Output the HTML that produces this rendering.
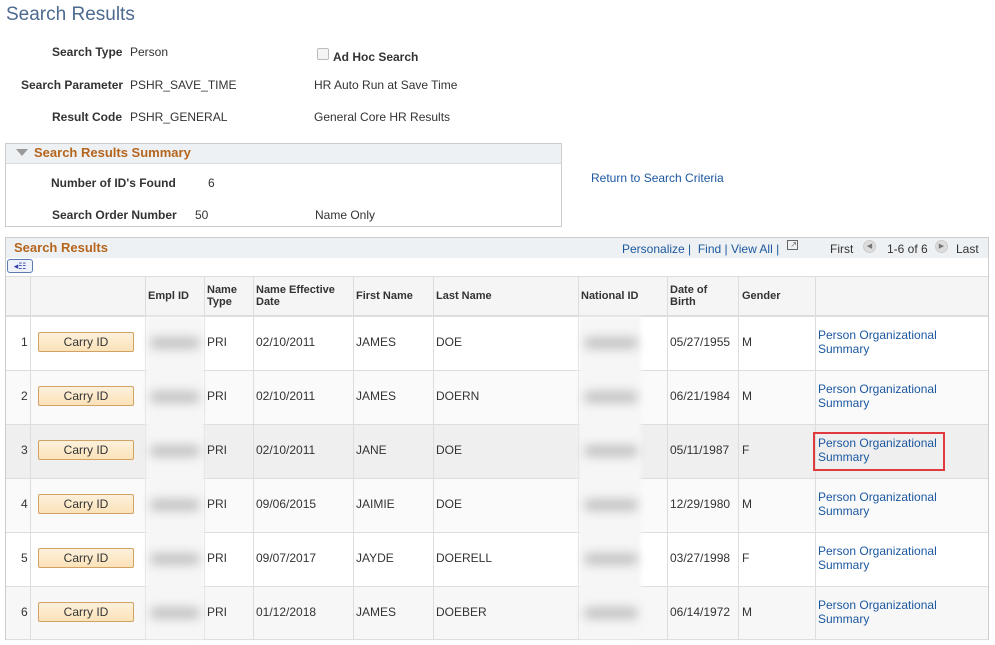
<!DOCTYPE html>
<html><head><meta charset="utf-8"><style>
*{margin:0;padding:0;box-sizing:border-box}
body{width:995px;height:645px;background:#fff;font-family:"Liberation Sans",Arial,sans-serif;font-size:12px;color:#333;position:relative;overflow:hidden}
.a{position:absolute;white-space:nowrap}
.b{font-weight:bold}
.lnk{color:#1c58a0}
.or{color:#b5651d;font-weight:bold;font-size:13px}
.hd{font-weight:bold;font-size:11px;line-height:12px;color:#333}
.btn{position:absolute;left:38px;width:96px;height:20px;border:1px solid #d2a265;border-radius:2px;background:linear-gradient(#fdf1dc,#fbe2b8);text-align:center;line-height:18px;color:#333}
.blur{position:absolute;height:12px;background:#c4c4c4;filter:blur(5px);border-radius:6px}
.vl{position:absolute;top:276px;height:363px;width:1px;background:#ddd}
.hl{position:absolute;left:6px;width:982px;height:1px;background:#ddd}
</style></head><body>
<div class="a" style="left:6px;top:4px;font-size:19px;color:#4d6a8f">Search Results</div>
<div class="a b" style="left:52px;top:45px">Search Type</div><div class="a" style="left:130px;top:45px">Person</div>
<div class="a" style="left:317px;top:48px;width:12px;height:12px;border:1px solid #bbb;border-radius:2px;background:#f4f4f4"></div>
<div class="a b" style="left:333px;top:50px">Ad Hoc Search</div>
<div class="a b" style="left:21px;top:78px">Search Parameter</div><div class="a" style="left:130px;top:78px">PSHR_SAVE_TIME</div><div class="a" style="left:314px;top:78px">HR Auto Run at Save Time</div>
<div class="a b" style="left:52px;top:110px">Result Code</div><div class="a" style="left:130px;top:110px">PSHR_GENERAL</div><div class="a" style="left:314px;top:110px">General Core HR Results</div>

<div class="a" style="left:5px;top:143px;width:557px;height:84px;border:1px solid #ccc"></div>
<div class="a" style="left:6px;top:144px;width:555px;height:20px;background:#eef1f3;border-bottom:1px solid #ddd"></div>
<div class="a" style="left:16px;top:149px;width:0;height:0;border-left:6px solid transparent;border-right:6px solid transparent;border-top:7px solid #999"></div>
<div class="a or" style="left:34px;top:145px">Search Results Summary</div>
<div class="a b" style="left:51px;top:176px">Number of ID's Found</div><div class="a" style="left:208px;top:176px">6</div>
<div class="a b" style="left:52px;top:208px">Search Order Number</div><div class="a" style="left:195px;top:208px">50</div><div class="a" style="left:315px;top:208px">Name Only</div>
<div class="a lnk" style="left:591px;top:171px">Return to Search Criteria</div>

<div class="a" style="left:5px;top:237px;width:984px;height:403px;border:1px solid #ccc"></div>
<div class="a" style="left:6px;top:238px;width:982px;height:20px;background:#eef1f3"></div>
<div class="a or" style="left:14px;top:240px">Search Results</div>
<div class="a lnk" style="left:622px;top:242px">Personalize | &nbsp;Find | View All | </div>
<div class="a" style="left:787px;top:240px;width:11px;height:10px;border:1px solid #666;font-size:8px;line-height:8px;color:#666;text-align:right">↗</div>
<div class="a" style="left:830px;top:242px">First</div>
<div class="a" style="left:863px;top:240px;width:13px;height:13px;border-radius:50%;background:#ddd;border:1px solid #ccc;font-size:7px;line-height:11px;text-align:center;color:#777">◀</div>
<div class="a" style="left:887px;top:242px">1-6 of 6</div>
<div class="a" style="left:935px;top:240px;width:13px;height:13px;border-radius:50%;background:#ddd;border:1px solid #ccc;font-size:7px;line-height:11px;text-align:center;color:#777">▶</div>
<div class="a" style="left:956px;top:242px">Last</div>
<div class="a" style="left:7px;top:259px;width:26px;height:14px;border:1px solid #5a7ab0;border-radius:3px;background:#eef2fa;font-size:9px;line-height:12px;color:#34a;text-align:center">◂☷</div>

<div class="a" style="left:6px;top:276px;width:982px;height:40px;background:#f5f5f5"></div>
<div class="a" style="left:6px;top:370px;width:982px;height:54px;background:#fafafa"></div>
<div class="a" style="left:6px;top:424px;width:982px;height:54px;background:#efefef"></div>
<div class="a" style="left:6px;top:478px;width:982px;height:54px;background:#fafafa"></div>
<div class="a" style="left:6px;top:586px;width:982px;height:54px;background:#f7f7f7"></div>
<div class="hl" style="top:276px"></div><div class="hl" style="top:315px;height:2px"></div>
<div class="hl" style="top:370px"></div><div class="hl" style="top:424px"></div><div class="hl" style="top:478px"></div><div class="hl" style="top:532px"></div><div class="hl" style="top:586px"></div><div class="hl" style="top:639px"></div>
<div class="vl" style="left:30px"></div><div class="vl" style="left:145px"></div><div class="vl" style="left:204px"></div><div class="vl" style="left:253px"></div><div class="vl" style="left:353px"></div><div class="vl" style="left:433px"></div><div class="vl" style="left:578px"></div><div class="vl" style="left:667px"></div><div class="vl" style="left:738px"></div><div class="vl" style="left:815px"></div>
<div class="a" style="left:146px;top:317px;width:58px;height:322px;background:#f6f6f6;filter:blur(2px)"></div>
<div class="a" style="left:579px;top:317px;width:62px;height:322px;background:#f6f6f6;filter:blur(2px)"></div>

<div class="a hd" style="left:148px;top:290px">Empl ID</div>
<div class="a hd" style="left:207px;top:284px">Name<br>Type</div>
<div class="a hd" style="left:256px;top:284px">Name Effective<br>Date</div>
<div class="a hd" style="left:356px;top:290px">First Name</div>
<div class="a hd" style="left:436px;top:290px">Last Name</div>
<div class="a hd" style="left:581px;top:290px">National ID</div>
<div class="a hd" style="left:670px;top:284px">Date of<br>Birth</div>
<div class="a hd" style="left:742px;top:290px">Gender</div>

<div class="a" style="left:21px;top:335px">1</div><div class="btn" style="top:332px">Carry ID</div><div class="blur" style="left:150px;top:337px;width:50px"></div><div class="a" style="left:207px;top:335px">PRI</div><div class="a" style="left:256px;top:335px">02/10/2011</div><div class="a" style="left:356px;top:335px">JAMES</div><div class="a" style="left:436px;top:335px">DOE</div><div class="blur" style="left:584px;top:337px;width:54px"></div><div class="a" style="left:670px;top:335px">05/27/1955</div><div class="a" style="left:742px;top:335px">M</div><div class="a lnk" style="left:818px;top:328px;line-height:14px">Person Organizational<br>Summary</div>
<div class="a" style="left:21px;top:389px">2</div><div class="btn" style="top:386px">Carry ID</div><div class="blur" style="left:150px;top:391px;width:50px"></div><div class="a" style="left:207px;top:389px">PRI</div><div class="a" style="left:256px;top:389px">02/10/2011</div><div class="a" style="left:356px;top:389px">JAMES</div><div class="a" style="left:436px;top:389px">DOERN</div><div class="blur" style="left:584px;top:391px;width:54px"></div><div class="a" style="left:670px;top:389px">06/21/1984</div><div class="a" style="left:742px;top:389px">M</div><div class="a lnk" style="left:818px;top:382px;line-height:14px">Person Organizational<br>Summary</div>
<div class="a" style="left:21px;top:443px">3</div><div class="btn" style="top:440px">Carry ID</div><div class="blur" style="left:150px;top:445px;width:50px"></div><div class="a" style="left:207px;top:443px">PRI</div><div class="a" style="left:256px;top:443px">02/10/2011</div><div class="a" style="left:356px;top:443px">JANE</div><div class="a" style="left:436px;top:443px">DOE</div><div class="blur" style="left:584px;top:445px;width:54px"></div><div class="a" style="left:670px;top:443px">05/11/1987</div><div class="a" style="left:742px;top:443px">F</div><div class="a lnk" style="left:818px;top:436px;line-height:14px">Person Organizational<br>Summary</div>
<div class="a" style="left:813px;top:432px;width:132px;height:39px;border:2px solid #e0393e"></div>
<div class="a" style="left:21px;top:497px">4</div><div class="btn" style="top:494px">Carry ID</div><div class="blur" style="left:150px;top:499px;width:50px"></div><div class="a" style="left:207px;top:497px">PRI</div><div class="a" style="left:256px;top:497px">09/06/2015</div><div class="a" style="left:356px;top:497px">JAIMIE</div><div class="a" style="left:436px;top:497px">DOE</div><div class="blur" style="left:584px;top:499px;width:54px"></div><div class="a" style="left:670px;top:497px">12/29/1980</div><div class="a" style="left:742px;top:497px">M</div><div class="a lnk" style="left:818px;top:490px;line-height:14px">Person Organizational<br>Summary</div>
<div class="a" style="left:21px;top:551px">5</div><div class="btn" style="top:548px">Carry ID</div><div class="blur" style="left:150px;top:553px;width:50px"></div><div class="a" style="left:207px;top:551px">PRI</div><div class="a" style="left:256px;top:551px">09/07/2017</div><div class="a" style="left:356px;top:551px">JAYDE</div><div class="a" style="left:436px;top:551px">DOERELL</div><div class="blur" style="left:584px;top:553px;width:54px"></div><div class="a" style="left:670px;top:551px">03/27/1998</div><div class="a" style="left:742px;top:551px">F</div><div class="a lnk" style="left:818px;top:544px;line-height:14px">Person Organizational<br>Summary</div>
<div class="a" style="left:21px;top:605px">6</div><div class="btn" style="top:602px">Carry ID</div><div class="blur" style="left:150px;top:607px;width:50px"></div><div class="a" style="left:207px;top:605px">PRI</div><div class="a" style="left:256px;top:605px">01/12/2018</div><div class="a" style="left:356px;top:605px">JAMES</div><div class="a" style="left:436px;top:605px">DOEBER</div><div class="blur" style="left:584px;top:607px;width:54px"></div><div class="a" style="left:670px;top:605px">06/14/1972</div><div class="a" style="left:742px;top:605px">M</div><div class="a lnk" style="left:818px;top:598px;line-height:14px">Person Organizational<br>Summary</div>
</body></html>
